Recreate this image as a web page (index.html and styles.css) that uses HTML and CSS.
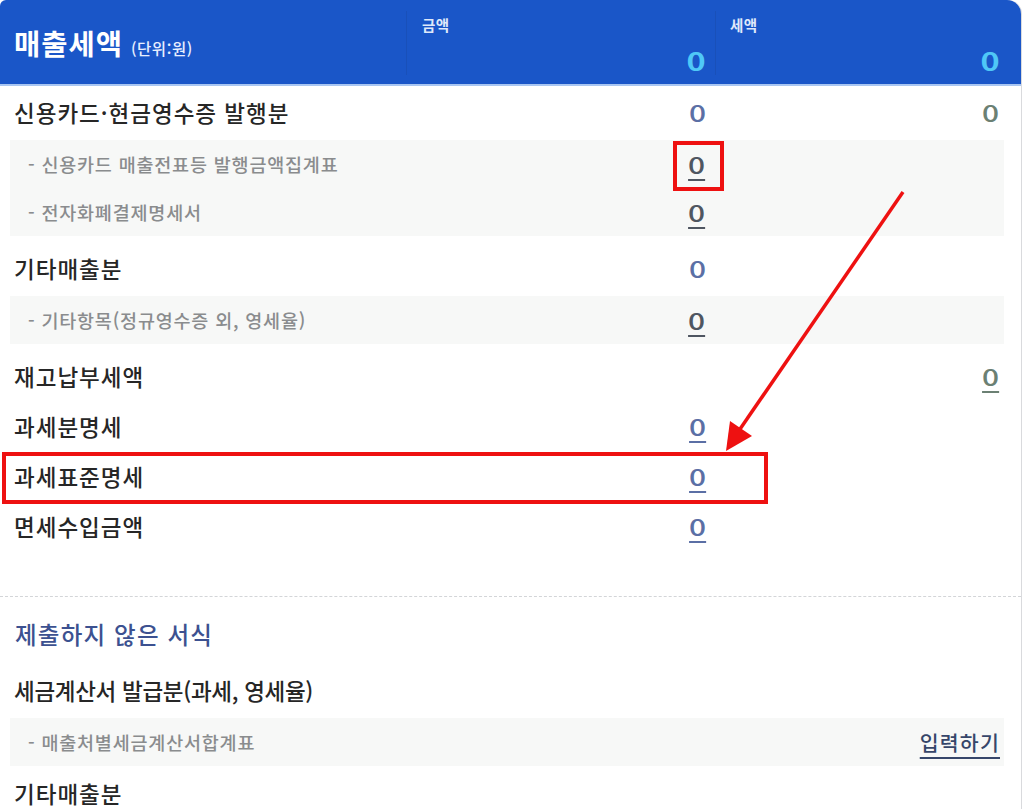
FILE: index.html
```html
<!DOCTYPE html>
<html lang="ko">
<head>
<meta charset="utf-8">
<title>매출세액</title>
<link rel="stylesheet" href="styles.css">
</head>
<body>
<div class="page">
  <div class="card">
    <div class="head">
      <div class="head-title"><span class="title">매출세액</span><span class="unit">(단위:원)</span></div>
      <div class="head-col head-amt"><span class="cap">금액</span><span class="num">0</span></div>
      <div class="head-col head-tax"><span class="cap">세액</span><span class="num">0</span></div>
    </div>

    <div class="row main first">
      <span class="label">신용카드·현금영수증 발행분</span>
      <span class="amt"><span class="val">0</span></span>
      <span class="tax"><span class="val green">0</span></span>
    </div>
    <div class="group">
      <div class="row sub">
        <span class="label">- 신용카드 매출전표등 발행금액집계표</span>
        <span class="amt"><span class="link dark">0</span></span>
        <span class="tax"></span>
      </div>
      <div class="row sub">
        <span class="label">- 전자화폐결제명세서</span>
        <span class="amt"><span class="link dark">0</span></span>
        <span class="tax"></span>
      </div>
    </div>

    <div class="row main">
      <span class="label">기타매출분</span>
      <span class="amt"><span class="val">0</span></span>
      <span class="tax"></span>
    </div>
    <div class="group">
      <div class="row sub">
        <span class="label">- 기타항목(정규영수증 외, 영세율)</span>
        <span class="amt"><span class="link dark">0</span></span>
        <span class="tax"></span>
      </div>
    </div>

    <div class="row main">
      <span class="label">재고납부세액</span>
      <span class="amt"></span>
      <span class="tax"><span class="link green">0</span></span>
    </div>
    <div class="row main">
      <span class="label">과세분명세</span>
      <span class="amt"><span class="link blue">0</span></span>
      <span class="tax"></span>
    </div>
    <div class="row main">
      <span class="label">과세표준명세</span>
      <span class="amt"><span class="link blue">0</span></span>
      <span class="tax"></span>
    </div>
    <div class="row main">
      <span class="label">면세수입금액</span>
      <span class="amt"><span class="link blue">0</span></span>
      <span class="tax"></span>
    </div>

    <div class="divider"></div>

    <div class="section-title">제출하지 않은 서식</div>

    <div class="row main">
      <span class="label tight">세금계산서 발급분(과세, 영세율)</span>
      <span class="amt"></span>
      <span class="tax"></span>
    </div>
    <div class="group last">
      <div class="row sub">
        <span class="label">- 매출처별세금계산서합계표</span>
        <span class="amt"></span>
        <span class="tax"><span class="input">입력하기</span></span>
      </div>
    </div>

    <div class="row main end">
      <span class="label">기타매출분</span>
      <span class="amt"></span>
      <span class="tax"></span>
    </div>
  </div>

  <svg class="overlay" width="1024" height="809" viewBox="0 0 1024 809">
    <rect x="675" y="143" width="47" height="46" fill="none" stroke="#ee1111" stroke-width="4"/>
    <rect x="4" y="454" width="762" height="48" fill="none" stroke="#ee1111" stroke-width="4"/>
    <line x1="903" y1="192" x2="738" y2="432" stroke="#ee1111" stroke-width="3.5"/>
    <polygon points="726,451 730,421 752,436" fill="#ee1111"/>
  </svg>
</div>
</body>
</html>
```

FILE: styles.css
```css
html, body {
  margin: 0;
  padding: 0;
  background: #ffffff;
  overflow: hidden;
}

body {
  font-family: "Noto Sans CJK KR", "Noto Sans", sans-serif;
  color: #222222;
}

.page {
  position: relative;
  width: 1024px;
  height: 809px;
  overflow: hidden;
}

.card {
  width: 1021px;
  height: 809px;
  border-right: 1px solid #d9dadd;
  border-top-right-radius: 14px;
  border-top-left-radius: 6px;
  background: #ffffff;
}

/* header */
.head {
  display: grid;
  grid-template-columns: 406px 309px 1fr;
  height: 84px;
  background: #1a56c8;
  border-bottom: 2px solid #a9c6f2;
  border-top-right-radius: 14px;
  border-top-left-radius: 6px;
}

.head-title {
  display: flex;
  align-items: baseline;
  padding: 22px 0 0 14px;
}

.title {
  font-size: 28.5px;
  font-weight: 700;
  color: #ffffff;
  letter-spacing: 1px;
}

.unit {
  margin-left: 8px;
  font-size: 15.5px;
  font-weight: 500;
  color: #e8efff;
  letter-spacing: 0.6px;
}

.head-col {
  display: flex;
  flex-direction: column;
  justify-content: space-between;
  margin: 11px 0 9px 0;
  border-left: 1px solid #1950b9;
}

.head-amt {
  padding: 3px 9px 0 15px;
}

.head-tax {
  padding: 3px 21px 0 14px;
}

.cap {
  font-size: 14.5px;
  font-weight: 700;
  color: #dfe8fa;
  letter-spacing: 0.5px;
}

.num {
  align-self: flex-end;
  display: inline-block;
  font-size: 25px;
  font-weight: 700;
  color: #4fc8f7;
  line-height: 30px;
  transform: scaleX(1.3);
  transform-origin: right center;
}

/* rows */
.row {
  display: grid;
  align-items: center;
}

.row.main {
  height: 50px;
  padding-left: 14px;
  grid-template-columns: 392px 309px 1fr;
}

.row.main.first {
  margin-top: 1px;
}

.row.main.end {
  height: 34px;
  align-items: end;
}

.row.main.end .label {
  line-height: 1.2;
}

.label {
  white-space: nowrap;
}

.row.main .label {
  font-size: 22.5px;
  font-weight: 500;
  color: #262626;
  letter-spacing: 1px;
}

.row.main .label.tight {
  letter-spacing: -0.3px;
}

.amt {
  text-align: right;
  padding-right: 9px;
}

.tax {
  text-align: right;
  padding-right: 22px;
}

.val,
.link {
  display: inline-block;
  font-size: 23px;
  font-weight: 500;
  transform: scaleX(1.3);
  transform-origin: right center;
}

.val {
  color: #5b6fa5;
}

.val.green {
  color: #6b8073;
}

.link {
  text-decoration: underline;
  text-decoration-thickness: 2px;
  text-underline-offset: 5px;
}

.link.dark {
  color: #4f5661;
}

.link.blue {
  color: #5b6fa5;
}

.link.green {
  color: #6b8073;
}

.input {
  font-size: 20.5px;
  font-weight: 500;
  color: #36466a;
  letter-spacing: 1.2px;
  text-decoration: underline;
  text-decoration-thickness: 2px;
  text-underline-offset: 6px;
}

/* grey sub groups */
.group {
  margin: 3px 17px 7px 10px;
  background: #f7f8f7;
}

.group.last {
  margin-bottom: 7px;
}

.row.sub {
  height: 48px;
  grid-template-columns: 396px 309px 1fr;
}

.row.sub .label {
  padding-left: 18px;
  font-size: 18.5px;
  font-weight: 500;
  color: #8a8c8e;
  letter-spacing: 0.8px;
}

.row.sub .amt {
  padding-right: 10px;
}

.row.sub .tax {
  padding-right: 4px;
}

/* lower section */
.divider {
  margin-top: 45px;
  border-top: 1px dashed #d3d5d8;
}

.section-title {
  height: 50px;
  margin-top: 12px;
  margin-bottom: 6px;
  padding-left: 15px;
  display: flex;
  align-items: center;
  font-size: 23.5px;
  font-weight: 500;
  color: #3c5190;
  letter-spacing: 1.2px;
}

/* annotation overlay */
.overlay {
  position: absolute;
  left: 0;
  top: 0;
  pointer-events: none;
}
```
